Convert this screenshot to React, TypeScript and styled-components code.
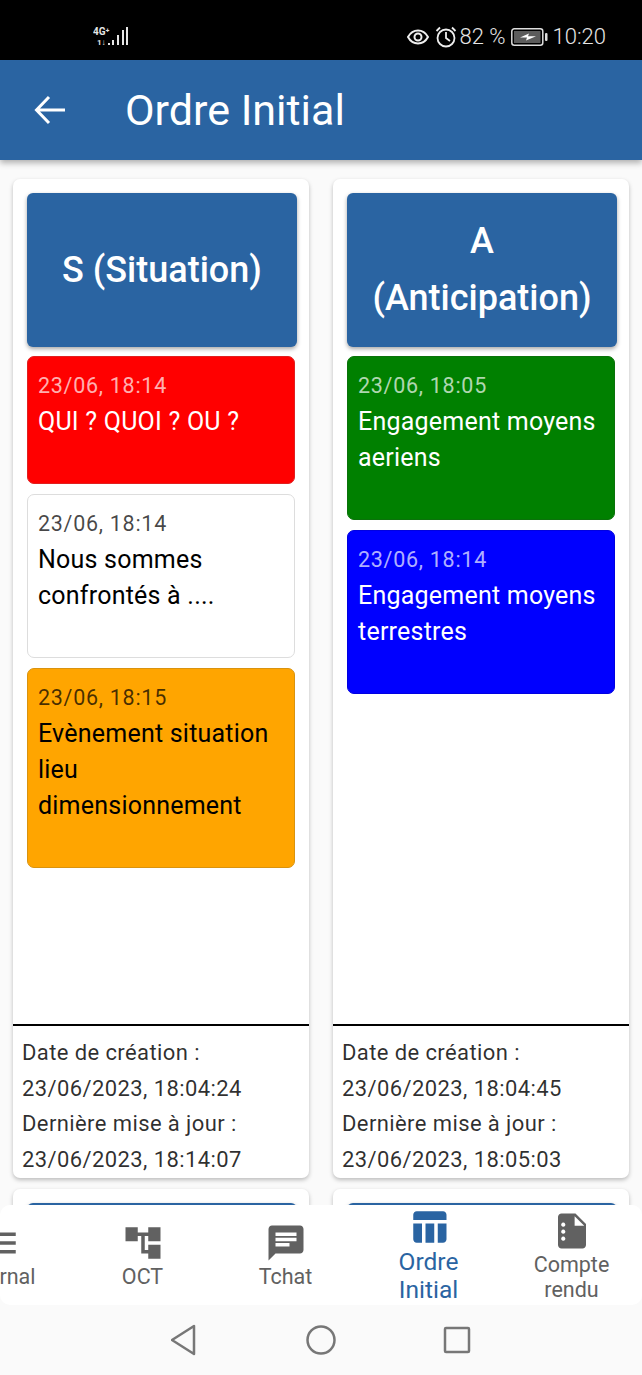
import React from 'react';
import styled, { createGlobalStyle } from 'styled-components';

const blue = '#2a64a2';
const navGrey = '#616161';

const GlobalStyle = createGlobalStyle`
    html, body { margin: 0; padding: 0; background: #fafafa; }
    * { box-sizing: border-box; }
    body { font-family: Roboto, "Liberation Sans", sans-serif; }
`;

const Screen = styled.div`
    width: 642px;
    height: 1375px;
    display: flex;
    flex-direction: column;
    overflow: hidden;
    background: #fafafa;
`;

const StatusBar = styled.div`
    height: 60px;
    flex-shrink: 0;
    background: #000;
    color: #e6e6e6;
    display: flex;
    align-items: center;
    justify-content: space-between;
    padding: 14px 36px 0 93px;
`;

const StatusRight = styled.div`
    display: flex;
    align-items: center;
    gap: 5px;
`;

const StatusIcons = styled.div`
    display: flex;
    align-items: center;
    gap: 6px;
    margin-right: -2px;
`;

const StatusText = styled.span`
    font-size: 22px;
    font-weight: 300;
    line-height: 28px;
    white-space: nowrap;
`;

const Header = styled.header`
    height: 100px;
    flex-shrink: 0;
    background: ${ blue };
    display: flex;
    align-items: center;
    gap: 59px;
    padding-left: 34px;
    box-shadow: 0 3px 6px rgba(0, 0, 0, 0.3);
    position: relative;
    z-index: 2;
`;

const Title = styled.h1`
    margin: 0;
    color: #fff;
    font-size: 43px;
    font-weight: 400;
    line-height: 48px;
`;

const Content = styled.main`
    flex: 1;
    min-height: 0;
    overflow: hidden;
    padding: 19px 13px 0;
    display: grid;
    grid-template-columns: 296px 296px;
    grid-auto-rows: min-content;
    column-gap: 24px;
    row-gap: 11px;
`;

const Card = styled.section`
    height: 999px;
    background: #fff;
    border-radius: 7px;
    box-shadow: 0 2px 4px rgba(0, 0, 0, 0.25);
    display: flex;
    flex-direction: column;
`;

const CardBody = styled.div`
    flex: 1;
    padding: 14px 14px 0;
    display: flex;
    flex-direction: column;
    align-items: flex-start;
    gap: 10px;
`;

const LetterBox = styled.div`
    width: 270px;
    height: 154px;
    margin-bottom: -1px;
    background: ${ blue };
    border-radius: 6px;
    box-shadow: 0 2px 4px rgba(0, 0, 0, 0.35);
    color: #fff;
    font-size: 36px;
    font-weight: 500;
    line-height: 57px;
    text-align: center;
    display: flex;
    align-items: center;
    justify-content: center;
    padding: 0 12px;
`;

const noteThemes = {
    red: { bg: '#ff0000', border: '#e02020', text: '#fff', date: 'rgba(255,255,255,0.7)' },
    white: { bg: '#fff', border: '#dddddd', text: '#000', date: 'rgba(0,0,0,0.72)' },
    orange: { bg: '#ffa500', border: '#d9930f', text: '#000', date: 'rgba(0,0,0,0.72)' },
    green: { bg: '#008000', border: '#0a720a', text: '#fff', date: 'rgba(255,255,255,0.7)' },
    blue: { bg: '#0000ff', border: '#0000e0', text: '#fff', date: 'rgba(255,255,255,0.7)' },
};

type NoteColour = keyof typeof noteThemes;

const Note = styled.article<{ $colour: NoteColour }>`
    width: 268px;
    padding: 15px 10px 43px;
    border-radius: 7px;
    border: 1.5px solid ${ p => noteThemes[ p.$colour ].border };
    background: ${ p => noteThemes[ p.$colour ].bg };
    color: ${ p => noteThemes[ p.$colour ].text };
`;

const NoteDate = styled.div<{ $colour: NoteColour }>`
    font-size: 21.5px;
    line-height: 28px;
    letter-spacing: 0.72px;
    margin-bottom: 4px;
    color: ${ p => noteThemes[ p.$colour ].date };
`;

const NoteText = styled.div`
    font-size: 25px;
    line-height: 36px;
    letter-spacing: 0.22px;
`;

const CardFooter = styled.footer`
    border-top: 2px solid #000;
    padding: 9px 9px 1px;
    font-size: 22px;
    line-height: 35.5px;
    letter-spacing: 0.4px;
    color: rgba(0, 0, 0, 0.82);
`;

const BottomNav = styled.nav`
    height: 100px;
    flex-shrink: 0;
    background: #fff;
    border-radius: 10px;
    overflow: hidden;
    position: relative;
    z-index: 1;
`;

const NavRow = styled.div`
    margin-left: -72px;
    display: grid;
    grid-template-columns: repeat(5, 143px);
    height: 100%;
`;

const NavItem = styled.div<{ $active?: boolean; $top: number }>`
    display: flex;
    flex-direction: column;
    align-items: center;
    padding-top: ${ p => p.$top }px;
    color: ${ p => p.$active ? blue : navGrey };
    text-align: center;
`;

const NavLabel = styled.span<{ $active?: boolean }>`
    max-width: 100px;
    font-size: ${ p => p.$active ? 24.5 : 21.5 }px;
    line-height: ${ p => p.$active ? 28 : 25 }px;
    font-weight: 400;
`;

const SystemNav = styled.div`
    height: 70px;
    flex-shrink: 0;
    background: #fafafa;
    display: flex;
    align-items: center;
    justify-content: center;
    gap: 107px;
`;

const Signal = () => (
    <svg width="36" height="22" viewBox="0 0 36 22" fill="#e6e6e6">
        <text x="0" y="9" fontSize="10" fontWeight="700" fontFamily="Roboto, sans-serif">4G⁺</text>
        <text x="4" y="19" fontSize="8" fontWeight="700" fontFamily="Roboto, sans-serif">1↓</text>
        <rect x="15" y="17" width="2" height="2" />
        <rect x="19" y="14" width="2" height="5" />
        <rect x="24" y="9" width="2" height="10" />
        <rect x="29" y="4" width="2" height="15" />
        <rect x="33" y="1" width="2" height="18" />
    </svg>
);

const Eye = () => (
    <svg width="22" height="22" viewBox="0 0 22 22" fill="none" stroke="#eee" strokeWidth="2">
        <path d="M1 11c2.5-4.5 6-6.5 10-6.5s7.500 2 10 6.500c-2.500 4.500-6 6.500-10 6.500s-7.500-2-10-6.500z" />
        <circle cx="11" cy="11" r="3.500" />
    </svg>
);

const Alarm = () => (
    <svg width="22" height="24" viewBox="0 0 22 24" fill="none" stroke="#eee" strokeWidth="1.8">
        <circle cx="11" cy="13" r="8.500" />
        <path d="M11 7v6l4 3M1.500 6 5 2.500M20.500 6 17 2.500" />
    </svg>
);

const Battery = () => (
    <svg width="37" height="20" viewBox="0 0 37 20">
        <rect x="0.800" y="1.800" width="31" height="16.400" rx="2.500" fill="none" stroke="#ddd" strokeWidth="1.500" />
        <rect x="3" y="4" width="26.500" height="12" fill="#5c5c5c" />
        <path d="M9 10.500 18 6.500 17 9.300H25L15 13.500 16 10.500z" fill="#fff" />
        <rect x="34" y="6" width="2.500" height="8" rx="1" fill="#ddd" />
    </svg>
);

const BackArrow = () => (
    <svg width="32" height="30" viewBox="0 0 32 30" fill="none" stroke="#fff" strokeWidth="3">
        <path d="M31 15H3M15 2 2.500 15 15 28" />
    </svg>
);

const MaterialIcon = ( p: { d: string } ) => (
    <svg width="42" height="42" viewBox="0 0 24 24" fill="currentColor" fillRule="evenodd">
        <path d={ p.d } />
    </svg>
);

const icons = {
    menu: 'M3 18h18v-2H3v2zm0-5h18v-2H3v2zm0-7v2h18V6H3z',
    tree: 'M22 11V3h-7v3H9V3H2v8h7V8h2v10h4v3h7v-8h-7v3h-2V8h2v3z',
    chat: 'M20 2H4c-1.100 0-1.990.9-1.990 2L2 22l4-4h14c1.100 0 2-.9 2-2V4c0-1.100-.9-2-2-2zM6 9h12v2H6V9zm8 5H6v-2h8v2zm4-6H6V6h12v2z',
    table: 'M10 10.020h5V21h-5zM17 21h3c1.100 0 2-.9 2-2v-9h-5v11zm3-18H5c-1.100 0-2 .9-2 2v3h19V5c0-1.100-.9-2-2-2zM3 19c0 1.100.9 2 2 2h3V10H3v9z',
    report: 'M6 2h8l6 6v12c0 1.100-.9 2-2 2H6c-1.100 0-2-.9-2-2V4c0-1.100.9-2 2-2zm7.500 1.500V9H19zM7 7.200a1.200 1.200 0 1 0 .01 0zM7 11.200a1.200 1.200 0 1 0 .01 0zM7 15.200a1.200 1.200 0 1 0 .01 0z',
};

const columns: { title: string; notes: { date: string; text: string; colour: NoteColour }[]; created: string; updated: string }[] = [
    {
        title: 'S (Situation)',
        created: '23/06/2023, 18:04:24',
        updated: '23/06/2023, 18:14:07',
        notes: [
            { date: '23/06, 18:14', text: 'QUI ? QUOI ? OU ?', colour: 'red' },
            { date: '23/06, 18:14', text: 'Nous sommes confrontés à ....', colour: 'white' },
            { date: '23/06, 18:15', text: 'Evènement situation lieu dimensionnement', colour: 'orange' },
        ],
    },
    {
        title: 'A (Anticipation)',
        created: '23/06/2023, 18:04:45',
        updated: '23/06/2023, 18:05:03',
        notes: [
            { date: '23/06, 18:05', text: 'Engagement moyens aeriens', colour: 'green' },
            { date: '23/06, 18:14', text: 'Engagement moyens terrestres', colour: 'blue' },
        ],
    },
];

export default function App(): React.JSX.Element {
    return (
        <Screen>
            <GlobalStyle />
            <StatusBar>
                <Signal />
                <StatusRight>
                    <StatusIcons>
                        <Eye />
                        <Alarm />
                    </StatusIcons>
                    <StatusText>82 %</StatusText>
                    <Battery />
                    <StatusText>10:20</StatusText>
                </StatusRight>
            </StatusBar>
            <Header>
                <BackArrow />
                <Title>Ordre Initial</Title>
            </Header>
            <Content>
                { columns.map( c => (
                    <Card key={ c.title }>
                        <CardBody>
                            <LetterBox>{ c.title }</LetterBox>
                            { c.notes.map( n => (
                                <Note key={ n.text } $colour={ n.colour }>
                                    <NoteDate $colour={ n.colour }>{ n.date }</NoteDate>
                                    <NoteText>{ n.text }</NoteText>
                                </Note>
                            ) ) }
                        </CardBody>
                        <CardFooter>
                            <div>Date de création :</div>
                            <div>{ c.created }</div>
                            <div>Dernière mise à jour :</div>
                            <div>{ c.updated }</div>
                        </CardFooter>
                    </Card>
                ) ) }
                <Card><CardBody><LetterBox /></CardBody></Card>
                <Card><CardBody><LetterBox /></CardBody></Card>
            </Content>
            <BottomNav>
                <NavRow>
                    <NavItem $top={ 17 }><MaterialIcon d={ icons.menu } /><NavLabel>Journal</NavLabel></NavItem>
                    <NavItem $top={ 17 }><MaterialIcon d={ icons.tree } /><NavLabel>OCT</NavLabel></NavItem>
                    <NavItem $top={ 17 }><MaterialIcon d={ icons.chat } /><NavLabel>Tchat</NavLabel></NavItem>
                    <NavItem $active $top={ 1 }><MaterialIcon d={ icons.table } /><NavLabel $active>Ordre Initial</NavLabel></NavItem>
                    <NavItem $top={ 5 }><MaterialIcon d={ icons.report } /><NavLabel>Compte rendu</NavLabel></NavItem>
                </NavRow>
            </BottomNav>
            <SystemNav>
                <svg width="28" height="32" viewBox="0 0 28 32" fill="none" stroke="#777" strokeWidth="2.500" strokeLinejoin="round"><path d="M23 2v28L1 16z" /></svg>
                <svg width="30" height="30" viewBox="0 0 30 30" fill="none" stroke="#777" strokeWidth="2.500"><circle cx="15" cy="15" r="13.500" /></svg>
                <svg width="28" height="28" viewBox="0 0 28 28" fill="none" stroke="#777" strokeWidth="2.500" strokeLinejoin="round"><rect x="2" y="2" width="24" height="24" rx="1" /></svg>
            </SystemNav>
        </Screen>
    );
}
